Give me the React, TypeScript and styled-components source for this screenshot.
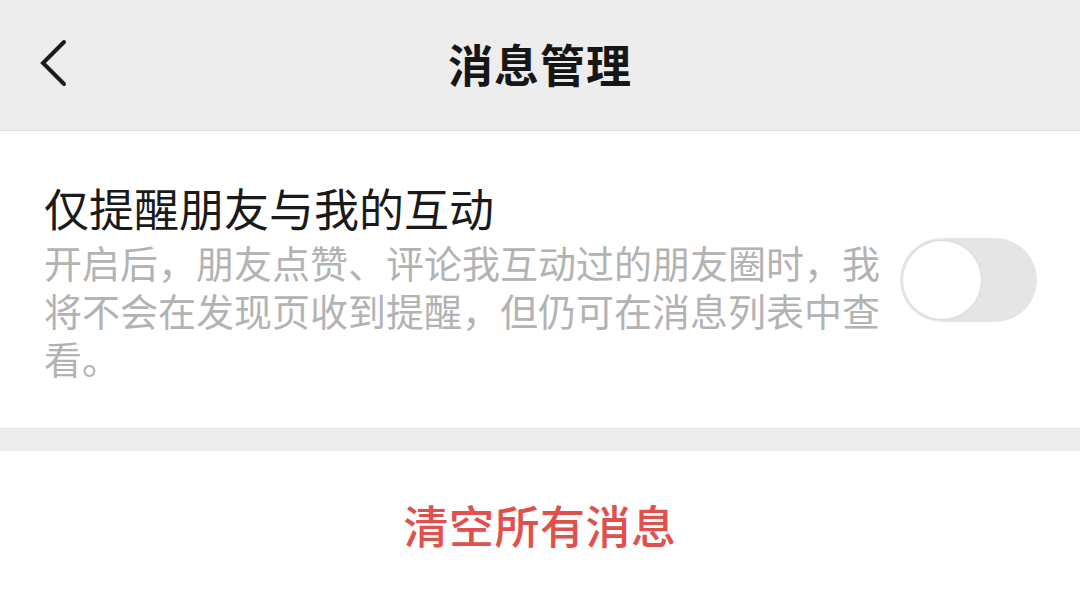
import styled, { createGlobalStyle } from "styled-components";
import { useState } from "react";

const GlobalStyle = createGlobalStyle`
  html, body {
    margin: 0;
    padding: 0;
    background: #ffffff;
    font-family: "Noto Sans CJK SC", "Noto Sans", sans-serif;
  }
  * {
    box-sizing: border-box;
  }
`;

const App = () => {
  const [onlyFriends, setOnlyFriends] = useState(false);

  return (
    <Page>
      <GlobalStyle />
      <Header>
        <BackButton aria-label="返回">
          <svg width="30" height="48" viewBox="0 0 30 48">
            <polyline
              points="25,3 4,24 25,45"
              fill="none"
              stroke="#1b1b1b"
              strokeWidth="4"
              strokeLinecap="round"
              strokeLinejoin="miter"
            />
          </svg>
        </BackButton>
        <HeaderTitle>消息管理</HeaderTitle>
        <span />
      </Header>

      <Cell>
        <CellText>
          <CellTitle>仅提醒朋友与我的互动</CellTitle>
          <CellDesc>
            开启后，朋友点赞、评论我互动过的朋友圈时，我将不会在发现页收到提醒，但仍可在消息列表中查看。
          </CellDesc>
        </CellText>
        <Switch
          $on={onlyFriends}
          onClick={() => setOnlyFriends((prev) => !prev)}
        >
          <Knob $on={onlyFriends} />
        </Switch>
      </Cell>

      <Spacer />

      <DangerRow>
        <DangerText>清空所有消息</DangerText>
      </DangerRow>
    </Page>
  );
};
export default App;

const Page = styled.div`
  width: 1080px;
  height: 594px;
  overflow: hidden;
  background: #ffffff;
  display: flex;
  flex-direction: column;
`;

const Header = styled.div`
  height: 131px;
  flex-shrink: 0;
  background: #ededed;
  border-bottom: 1px solid #e2e2e2;
  display: grid;
  grid-template-columns: 1fr auto 1fr;
  align-items: center;
  padding: 0 39px;
`;

const BackButton = styled.button`
  justify-self: start;
  border: none;
  background: none;
  padding: 0;
  display: flex;
  align-items: center;
  cursor: pointer;
  margin-top: -4px;
`;

const HeaderTitle = styled.h1`
  margin: 0;
  font-size: 45px;
  font-weight: 700;
  color: #161616;
  letter-spacing: 1px;
  margin-top: -4px;
`;

const Cell = styled.div`
  height: 298px;
  flex-shrink: 0;
  display: flex;
  align-items: center;
  padding: 0 43px 0 44px;
  gap: 20px;
  border-bottom: 1px solid #e2e2e2;
`;

const CellText = styled.div`
  flex: 1;
  display: flex;
  flex-direction: column;
  margin-top: 0;
`;

const CellTitle = styled.div`
  font-size: 45px;
  line-height: 60px;
  color: #1a1a1a;
  font-weight: 400;
`;

const CellDesc = styled.div`
  font-size: 38px;
  line-height: 48px;
  color: #b3b3b3;
`;

const Switch = styled.div<{ $on: boolean }>`
  width: 137px;
  height: 84px;
  flex-shrink: 0;
  border-radius: 42px;
  background: ${({ $on }) => ($on ? "#07c160" : "#e5e5e5")};
  padding: 3px;
  display: flex;
  justify-content: ${({ $on }) => ($on ? "flex-end" : "flex-start")};
  cursor: pointer;
`;

const Knob = styled.div<{ $on: boolean }>`
  width: 78px;
  height: 78px;
  border-radius: 50%;
  background: #ffffff;
  box-shadow: 0 0 0 1px #dcdcdc;
`;

const Spacer = styled.div`
  height: 22px;
  flex-shrink: 0;
  background: #ededed;
`;

const DangerRow = styled.div`
  height: 146px;
  flex-shrink: 0;
  display: flex;
  align-items: center;
  justify-content: center;
  background: #ffffff;
`;

const DangerText = styled.span`
  font-size: 45px;
  font-weight: 500;
  color: #e0504d;
  letter-spacing: 0.5px;
`;
